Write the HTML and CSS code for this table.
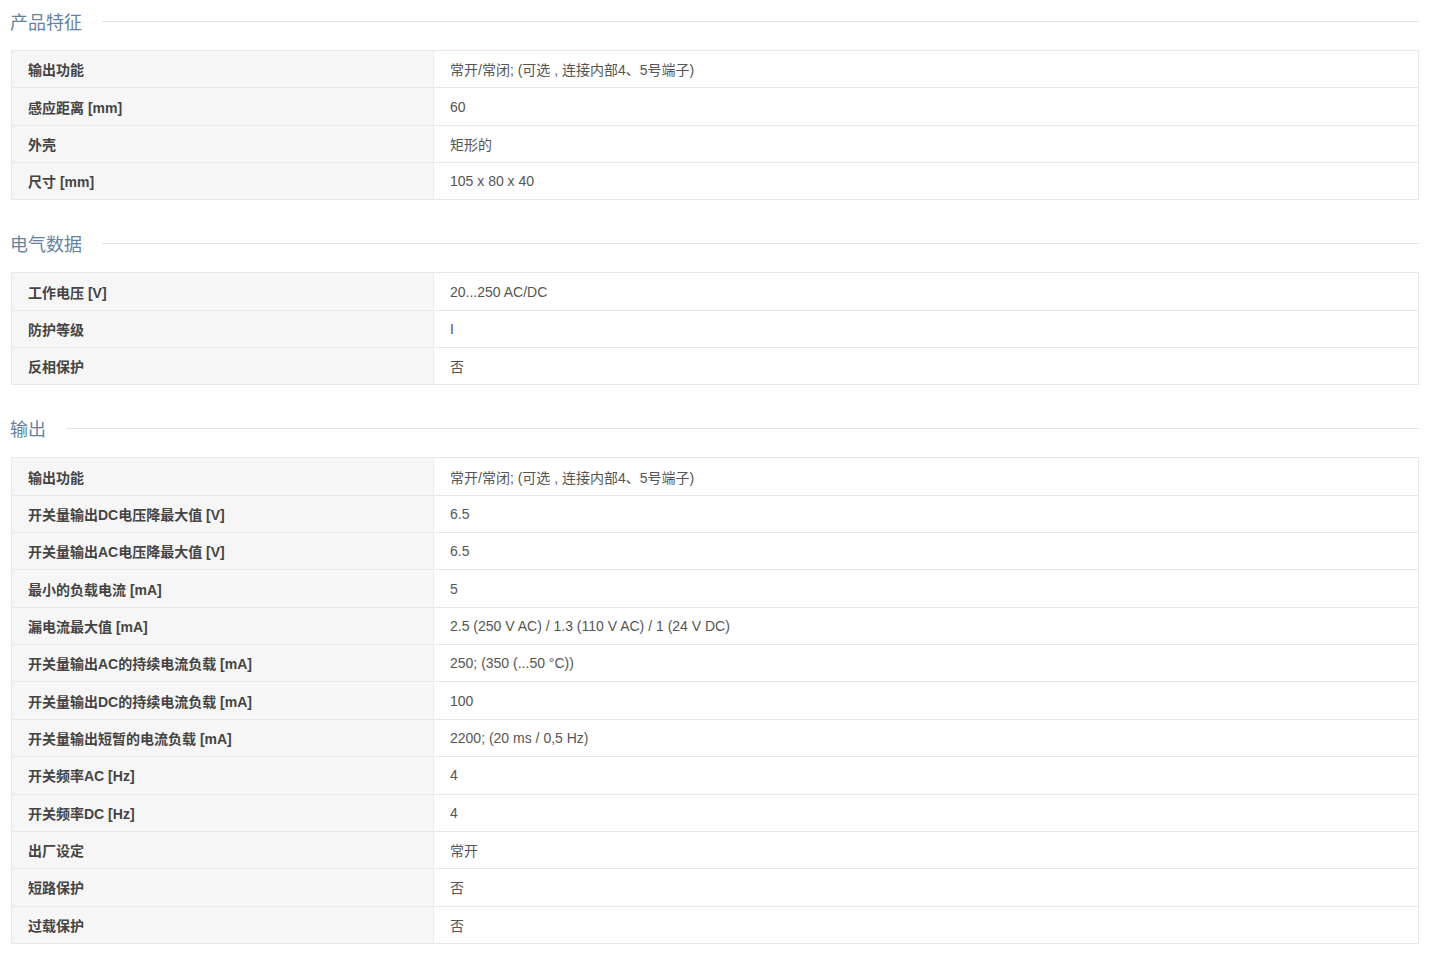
FILE: index.html
```html
<!DOCTYPE html>
<html lang="zh-CN">
<head>
<meta charset="utf-8">
<title>产品参数</title>
<link rel="stylesheet" href="styles.css">
</head>
<body>
<div class="page">
  <section class="section">
    <div class="section-head"><h2 class="section-title">产品特征</h2><span class="section-line"></span></div>
    <div class="spec">
      <div class="row"><div class="label">输出功能</div><div class="value">常开/常闭; (可选 , 连接内部4、5号端子)</div></div>
      <div class="row"><div class="label">感应距离 [mm]</div><div class="value">60</div></div>
      <div class="row"><div class="label">外壳</div><div class="value">矩形的</div></div>
      <div class="row"><div class="label">尺寸 [mm]</div><div class="value">105 x 80 x 40</div></div>
    </div>
  </section>
  <section class="section">
    <div class="section-head"><h2 class="section-title">电气数据</h2><span class="section-line"></span></div>
    <div class="spec">
      <div class="row"><div class="label">工作电压 [V]</div><div class="value">20...250 AC/DC</div></div>
      <div class="row"><div class="label">防护等级</div><div class="value">I</div></div>
      <div class="row"><div class="label">反相保护</div><div class="value">否</div></div>
    </div>
  </section>
  <section class="section">
    <div class="section-head"><h2 class="section-title">输出</h2><span class="section-line"></span></div>
    <div class="spec">
      <div class="row"><div class="label">输出功能</div><div class="value">常开/常闭; (可选 , 连接内部4、5号端子)</div></div>
      <div class="row"><div class="label">开关量输出DC电压降最大值 [V]</div><div class="value">6.5</div></div>
      <div class="row"><div class="label">开关量输出AC电压降最大值 [V]</div><div class="value">6.5</div></div>
      <div class="row"><div class="label">最小的负载电流 [mA]</div><div class="value">5</div></div>
      <div class="row"><div class="label">漏电流最大值 [mA]</div><div class="value">2.5 (250 V AC) / 1.3 (110 V AC) / 1 (24 V DC)</div></div>
      <div class="row"><div class="label">开关量输出AC的持续电流负载 [mA]</div><div class="value">250; (350 (...50 °C))</div></div>
      <div class="row"><div class="label">开关量输出DC的持续电流负载 [mA]</div><div class="value">100</div></div>
      <div class="row"><div class="label">开关量输出短暂的电流负载 [mA]</div><div class="value">2200; (20 ms / 0,5 Hz)</div></div>
      <div class="row"><div class="label">开关频率AC [Hz]</div><div class="value">4</div></div>
      <div class="row"><div class="label">开关频率DC [Hz]</div><div class="value">4</div></div>
      <div class="row"><div class="label">出厂设定</div><div class="value">常开</div></div>
      <div class="row"><div class="label">短路保护</div><div class="value">否</div></div>
      <div class="row"><div class="label">过载保护</div><div class="value">否</div></div>
    </div>
  </section>
</div>
</body>
</html>
```
FILE: styles.css
```css
html, body {
  margin: 0;
  padding: 0;
  background: #ffffff;
}
body {
  font-family: "Liberation Sans", "Noto Sans CJK SC", sans-serif;
  font-size: 14px;
  color: #555555;
}
.page {
  padding: 0 14px 0 11px;
}
.section {
  margin-bottom: 22px;
}
.section-head {
  display: flex;
  align-items: center;
  height: 42px;
  margin-bottom: 8px;
}
.section-title {
  margin: 0 20px 0 -1px;
  font-size: 18px;
  font-weight: normal;
  line-height: 24px;
  color: #64839f;
  font-family: "Noto Sans CJK SC", "Liberation Sans", sans-serif;
}
.section-line {
  flex: 1;
  height: 1px;
  background: #e3e3e3;
}
.spec {
  border: 1px solid #e8e8e8;
  border-top: 0;
}
.row {
  display: flex;
  height: 37.35px;
  box-sizing: border-box;
  border-top: 1px solid #e8e8e8;
}
.label {
  width: 422px;
  flex: none;
  box-sizing: border-box;
  padding: 0 16px;
  display: flex;
  align-items: center;
  background: #f6f6f6;
  border-right: 1px solid #ececec;
  font-weight: bold;
  color: #444444;
}
.value {
  flex: 1;
  padding: 0 16px 0 16px;
  display: flex;
  align-items: center;
  color: #555555;
}
```
